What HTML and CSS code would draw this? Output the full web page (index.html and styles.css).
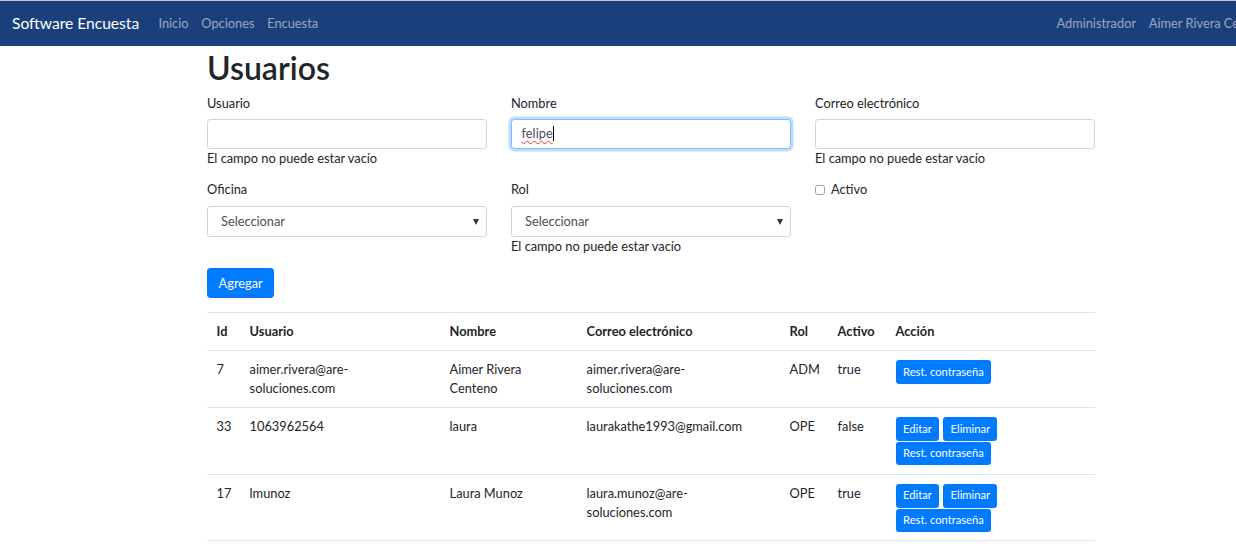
FILE: index.html
```html
<!DOCTYPE html>
<html lang="es">
<head>
<meta charset="utf-8">
<title>Usuarios - Software Encuesta</title>
<link rel="stylesheet" href="styles.css">
</head>
<body>
<div class="page">
  <nav class="navbar">
    <a class="brand" href="#">Software Encuesta</a>
    <ul class="nav">
      <li><a href="#">Inicio</a></li>
      <li><a href="#">Opciones</a></li>
      <li><a href="#">Encuesta</a></li>
    </ul>
    <ul class="nav nav-right">
      <li><a href="#">Administrador</a></li>
      <li><a href="#">Aimer Rivera Centeno</a></li>
    </ul>
  </nav>

  <main class="container">
    <h1>Usuarios</h1>
    <form class="form-grid">
      <div class="field">
        <label class="label">Usuario</label>
        <input class="control" type="text">
        <div class="feedback">El campo no puede estar vacío</div>
      </div>
      <div class="field">
        <label class="label">Nombre</label>
        <div class="control control-focus" role="textbox"><span class="misspelled">felipe</span><span class="caret"></span></div>
      </div>
      <div class="field">
        <label class="label">Correo electrónico</label>
        <input class="control" type="text">
        <div class="feedback">El campo no puede estar vacío</div>
      </div>

      <div class="field">
        <label class="label">Oficina</label>
        <div class="select-wrap">
          <select class="control select"><option>Seleccionar</option></select>
        </div>
      </div>
      <div class="field">
        <label class="label">Rol</label>
        <div class="select-wrap">
          <select class="control select"><option>Seleccionar</option></select>
        </div>
        <div class="feedback">El campo no puede estar vacío</div>
      </div>
      <div class="field">
        <label class="check"><input type="checkbox" class="check-input"><span>Activo</span></label>
      </div>
    </form>

    <button class="btn" type="button">Agregar</button>

    <table class="table">
      <colgroup>
        <col class="c-id"><col class="c-user"><col class="c-name"><col class="c-mail"><col class="c-rol"><col class="c-act"><col class="c-acc">
      </colgroup>
      <thead>
        <tr><th>Id</th><th>Usuario</th><th>Nombre</th><th>Correo electrónico</th><th>Rol</th><th>Activo</th><th>Acción</th></tr>
      </thead>
      <tbody>
        <tr>
          <td>7</td>
          <td>aimer.rivera@are-<br>soluciones.com</td>
          <td>Aimer Rivera<br>Centeno</td>
          <td>aimer.rivera@are-<br>soluciones.com</td>
          <td>ADM</td>
          <td>true</td>
          <td><div class="actions"><button class="btn-sm" type="button">Rest. contraseña</button></div></td>
        </tr>
        <tr>
          <td>33</td>
          <td>1063962564</td>
          <td>laura</td>
          <td>laurakathe1993@gmail.com</td>
          <td>OPE</td>
          <td>false</td>
          <td><div class="actions"><div class="btn-row"><button class="btn-sm" type="button">Editar</button><button class="btn-sm" type="button">Eliminar</button></div><button class="btn-sm" type="button">Rest. contraseña</button></div></td>
        </tr>
        <tr>
          <td>17</td>
          <td>lmunoz</td>
          <td>Laura Munoz</td>
          <td>laura.munoz@are-<br>soluciones.com</td>
          <td>OPE</td>
          <td>true</td>
          <td><div class="actions"><div class="btn-row"><button class="btn-sm" type="button">Editar</button><button class="btn-sm" type="button">Eliminar</button></div><button class="btn-sm" type="button">Rest. contraseña</button></div></td>
        </tr>
      </tbody>
    </table>
  </main>
</div>
</body>
</html>
```

FILE: styles.css
```css
html {
  overflow: hidden;
}

body {
  margin: 0;
  font-family: "Lato", "Noto Sans", sans-serif;
  font-size: 12.8px;
  line-height: 1.5;
  color: #212529;
  background: #fff;
}

.page {
  width: 1291px;
}

/* Navbar */
.navbar {
  display: flex;
  align-items: center;
  padding: 6.4px 12.8px 6.4px 12px;
  background: #1b3f7b;
  border-top: 1px solid #c8c8c8;
}

.brand {
  font-size: 15.6px;
  line-height: 24px;
  padding: 4px 0;
  margin-right: 12.8px;
  color: #fff;
  text-decoration: none;
}

.nav {
  display: flex;
  list-style: none;
  margin: 0;
  padding: 0;
}

.nav a {
  display: block;
  padding: 6.4px 6.4px;
  line-height: 19.2px;
  color: rgba(255, 255, 255, 0.55);
  text-decoration: none;
}

.nav-right {
  margin-left: auto;
}

/* Content */
.container {
  width: 888px;
  margin: 0 0 0 207px;
}

h1 {
  font-size: 32px;
  line-height: 1.2;
  font-weight: 600;
  margin: 0 0 6.4px;
  padding-top: 3px;
}

.form-grid {
  display: grid;
  grid-template-columns: repeat(3, 280px);
  column-gap: 24px;
  margin: 0;
}

.field {
  margin-bottom: 12px;
}

.label {
  display: block;
  margin-bottom: 6px;
}

.control {
  display: block;
  box-sizing: border-box;
  width: 100%;
  height: 30.4px;
  padding: 4.8px 9.6px;
  font: inherit;
  color: #495057;
  background: #fff;
  border: 1px solid #ced4da;
  border-radius: 3.2px;
  outline: none;
}

.control-focus {
  border-color: #80bdff;
  box-shadow: 0 0 0 2.5px rgba(0, 123, 255, 0.25);
  display: flex;
  align-items: center;
  color: #495057;
}

.misspelled {
  text-decoration: underline wavy #e53935;
  text-decoration-thickness: 1px;
  text-underline-offset: 2px;
}

.caret {
  display: inline-block;
  width: 1px;
  height: 15px;
  background: #000;
}

.feedback {
  line-height: 19.2px;
}

.select-wrap {
  position: relative;
}

.select {
  appearance: none;
  -webkit-appearance: none;
  height: 31.5px;
  padding-left: 13px;
}

.select-wrap::after {
  content: "";
  position: absolute;
  right: 8px;
  top: 13.5px;
  border-left: 3.5px solid transparent;
  border-right: 3.5px solid transparent;
  border-top: 6px solid #333;
}

.check {
  display: flex;
  align-items: center;
  line-height: 19.2px;
}

.check-input {
  width: 10px;
  height: 10px;
  margin: 0 6px 0 0;
  accent-color: #aaa;
  opacity: 0.7;
}

.btn {
  display: block;
  font: inherit;
  line-height: 19.2px;
  color: #fff;
  background: #007bff;
  border: 1px solid #007bff;
  border-radius: 3.2px;
  padding: 4.4px 10.6px;
  margin: 0 0 14px;
}

/* Table */
.table {
  width: 100%;
  border-collapse: collapse;
  table-layout: fixed;
}

.c-id { width: 33px; }
.c-user { width: 200px; }
.c-name { width: 137px; }
.c-mail { width: 203px; }
.c-rol { width: 48px; }
.c-act { width: 58px; }
.c-acc { width: auto; }

.table th,
.table td {
  padding: 8.8px 9.6px;
  text-align: left;
  vertical-align: top;
  border-top: 1px solid #dee2e6;
  line-height: 19.2px;
}

.table td {
  padding-top: 9.2px;
  padding-bottom: 8.4px;
}

.table thead th {
  font-weight: 700;
  border-bottom: 1px solid #dee2e6;
}

.table tbody tr:last-child td {
  border-bottom: 1px solid #dee2e6;
}

.actions {
  display: flex;
  flex-direction: column;
  align-items: flex-start;
  gap: 1px;
}

.btn-row {
  display: flex;
  gap: 4px;
}

.btn-sm {
  font: inherit;
  font-size: 11.2px;
  line-height: 16.8px;
  color: #fff;
  background: #007bff;
  border: 1px solid #007bff;
  border-radius: 2.6px;
  padding: 2.4px 6.4px;
}
```
